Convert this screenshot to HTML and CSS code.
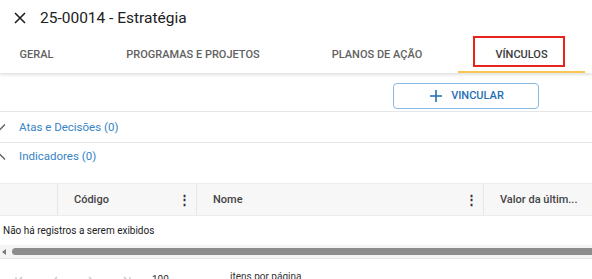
FILE: index.html
```html
<!DOCTYPE html>
<html>
<head>
  <title>25-00014 - Estratégia</title>
  <link rel="stylesheet" href="styles.css">
</head>
<body>
  <div class="header">
    <svg class="close" width="12" height="12" viewBox="0 0 12 12">
      <path d="M1 1 L11 11 M11 1 L1 11" stroke="#212121" stroke-width="1.6" fill="none"/>
    </svg>
    <span class="title">25-00014 - Estratégia</span>
  </div>

  <ul class="tabs">
    <li class="tab tab-geral">Geral</li>
    <li class="tab tab-programas">Programas e Projetos</li>
    <li class="tab tab-planos">Planos de Ação</li>
    <li class="tab tab-vinculos active">Vínculos<span class="highlight"></span></li>
  </ul>

  <div class="toolbar">
    <button class="btn-vincular">
      <svg width="12" height="12" viewBox="0 0 12 12">
        <path d="M6 0 V12 M0 6 H12" stroke="#1f6fb5" stroke-width="1.6" fill="none"/>
      </svg>
      Vincular
    </button>
  </div>

  <div class="section">
    <svg class="chevron" width="12" height="12" viewBox="0 0 12 12">
      <path d="M1 3.5 L6 8.5 L11 3.5" stroke="#616161" stroke-width="1.4" fill="none"/>
    </svg>
    <span class="section-title">Atas e Decisões (0)</span>
  </div>

  <div class="section open">
    <svg class="chevron" width="12" height="12" viewBox="0 0 12 12">
      <path d="M1 8.5 L6 3.5 L11 8.5" stroke="#616161" stroke-width="1.4" fill="none"/>
    </svg>
    <span class="section-title">Indicadores (0)</span>
  </div>

  <div class="grid">
    <div class="grid-head">
      <div class="col col-check"></div>
      <div class="col col-codigo">Código<span class="dots">&#8942;</span></div>
      <div class="col col-nome">Nome<span class="dots">&#8942;</span></div>
      <div class="col col-valor">Valor da últim...</div>
    </div>
    <div class="grid-empty">Não há registros a serem exibidos</div>
    <div class="scrollbar">
      <span class="arrow-left"></span>
      <span class="thumb"></span>
    </div>
  </div>

  <div class="pager">
    <svg class="pg" width="10" height="10" viewBox="0 0 10 10">
      <path d="M2 1 V9 M8 1 L4 5 L8 9" stroke="#c4c4c4" stroke-width="1.2" fill="none"/>
    </svg>
    <svg class="pg" width="10" height="10" viewBox="0 0 10 10">
      <path d="M7 1 L3 5 L7 9" stroke="#c4c4c4" stroke-width="1.2" fill="none"/>
    </svg>
    <svg class="pg" width="10" height="10" viewBox="0 0 10 10">
      <path d="M3 1 L7 5 L3 9" stroke="#c4c4c4" stroke-width="1.2" fill="none"/>
    </svg>
    <svg class="pg" width="10" height="10" viewBox="0 0 10 10">
      <path d="M2 1 L6 5 L2 9 M8 1 V9" stroke="#c4c4c4" stroke-width="1.2" fill="none"/>
    </svg>
    <span class="size">100</span>
    <span class="caret"></span>
    <span class="per-page">itens por página</span>
  </div>
</body>
</html>
```

FILE: styles.css
```css
body {
  margin: 0;
  font-family: Roboto, "Liberation Sans", sans-serif;
  color: #212121;
  background: #ffffff;
  overflow: hidden;
}

.header {
  height: 36px;
  display: flex;
  align-items: center;
  padding-left: 14px;
}

.title {
  margin-left: 14px;
  font-size: 15.5px;
  color: #212121;
}

.tabs {
  list-style-type: none;
  margin: 0;
  padding: 0;
  height: 37px;
  display: flex;
  box-shadow: 0 2px 3px rgba(0, 0, 0, 0.12);
  position: relative;
}

.tab {
  display: flex;
  align-items: center;
  justify-content: center;
  text-transform: uppercase;
  font-size: 11px;
  font-weight: 500;
  color: #616161;
  box-sizing: border-box;
  position: relative;
}

.tab-geral { width: 73px; }
.tab-programas { width: 240px; }
.tab-planos { width: 128px; margin-right: 17px; }
.tab-vinculos { width: 127px; }

.tab.active {
  color: #3a3a3a;
  border-bottom: 2px solid #f9c74f;
  padding-top: 1px;
}

.highlight {
  position: absolute;
  left: 15px;
  top: 0;
  width: 92px;
  height: 31px;
  border: 2px solid #e8231e;
  box-sizing: border-box;
}

.toolbar {
  height: 39px;
  display: flex;
  justify-content: flex-end;
  align-items: center;
  padding-right: 53px;
  border-bottom: 1px solid #e6e6e6;
  box-sizing: border-box;
}

.btn-vincular {
  width: 146px;
  height: 26px;
  margin-top: 7px;
  display: flex;
  align-items: center;
  justify-content: center;
  gap: 9px;
  background: #ffffff;
  border: 1px solid #8ab8e0;
  border-radius: 4px;
  color: #1f6fb5;
  font-family: Roboto, "Liberation Sans", sans-serif;
  font-size: 11px;
  font-weight: 500;
  text-transform: uppercase;
  padding: 0 0 0 2px;
}

.section {
  height: 30px;
  display: flex;
  align-items: center;
  border-bottom: 1px solid #e6e6e6;
}

.section.open {
  height: 40px;
  border-bottom: none;
  align-items: flex-start;
  padding-top: 6px;
  box-sizing: border-box;
}

.chevron {
  margin-left: -6px;
  margin-right: 13px;
}

.section.open .chevron {
  margin-top: 2px;
}

.section-title {
  font-size: 11.5px;
  color: #3584c6;
}

.grid-head {
  height: 33px;
  display: flex;
  background: #f7f7f7;
  border-top: 1px solid #ececec;
  border-bottom: 1px solid #ececec;
  box-sizing: border-box;
  font-size: 11px;
  font-weight: 500;
  color: #444444;
}

.col {
  display: flex;
  align-items: center;
  box-sizing: border-box;
  border-right: 1px solid #e6e6e6;
  padding-left: 16px;
}

.col-check { width: 58px; }
.col-codigo { width: 139px; }
.col-nome { width: 287px; }
.col-valor { flex: 1; border-right: none; white-space: nowrap; }

.dots {
  margin-left: auto;
  margin-right: 5px;
  font-size: 13px;
  font-weight: bold;
  color: #333333;
}

.grid-empty {
  height: 29px;
  display: flex;
  align-items: center;
  padding-left: 3px;
  font-size: 10px;
  color: #212121;
}

.scrollbar {
  height: 13px;
  display: flex;
  align-items: center;
  background: #f4f4f4;
  border-bottom: 1px solid #e6e6e6;
}

.arrow-left {
  width: 0;
  height: 0;
  margin-left: 2px;
  border-top: 3px solid transparent;
  border-bottom: 3px solid transparent;
  border-right: 4px solid #7a7a7a;
}

.thumb {
  flex: 1;
  height: 7px;
  margin-left: 6px;
  background: #8c8c8c;
  border-radius: 4px 0 0 4px;
}

.pager {
  display: flex;
  align-items: center;
  height: 24px;
  padding-top: 8px;
  font-size: 10px;
  color: #333333;
}

.pg {
  margin: 4px 12px 0 14px;
}

.pg:first-child { margin-left: 14px; }

.size {
  margin-left: 8px;
  width: 56px;
}

.caret {
  width: 0;
  height: 0;
  margin-top: 4px;
  border-left: 4px solid transparent;
  border-right: 4px solid transparent;
  border-top: 4px solid #666666;
}

.per-page {
  margin-left: 14px;
  margin-top: -6px;
}
```
